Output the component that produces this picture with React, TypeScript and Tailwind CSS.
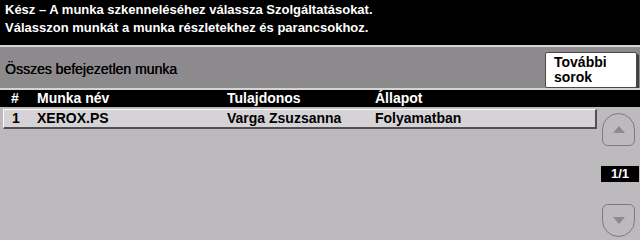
import React from 'react';

// Job list screen of a copier touch panel: status header, queue bar, job table, pager.

interface Job {
  id: number;
  name: string;
  owner: string;
  status: string;
}

const jobs: Job[] = [
  { id: 1, name: 'XEROX.PS', owner: 'Varga Zsuzsanna', status: 'Folyamatban' },
];

function PagerButton({ dir }: { dir: 'up' | 'down' }) {
  const shape =
    dir === 'up'
      ? 'rounded-t-[17px] rounded-b-[6px]'
      : 'rounded-b-[17px] rounded-t-[6px]';
  return (
    <button
      className={`w-[33px] h-[33px] border border-[#7b797b] bg-[#bdbabd] flex items-center justify-center ${shape}`}
      aria-label={dir === 'up' ? 'Fel' : 'Le'}
    >
      <svg width="12" height="7" viewBox="0 0 12 7">
        {dir === 'up' ? (
          <polygon points="6,0 12,7 0,7" fill="#8c8a8c" />
        ) : (
          <polygon points="0,0 12,0 6,7" fill="#8c8a8c" />
        )}
      </svg>
    </button>
  );
}

export default function App() {
  return (
    <div className="w-[640px] h-[240px] overflow-hidden bg-[#bdbabd] flex flex-col font-['Liberation_Sans',Arial,sans-serif] select-none">
      {/* Status message */}
      <div className="h-[45px] bg-black text-white font-bold text-[13px] leading-[18px] pl-[5px] pt-[1px]">
        <div>Kész – A munka szkenneléséhez válassza Szolgáltatásokat.</div>
        <div>Válasszon munkát a munka részletekhez és parancsokhoz.</div>
      </div>
      <div className="h-[2px] bg-[#d6d3d6]" />

      {/* Queue bar */}
      <div className="h-[41px] bg-[#8c8a8c] flex items-center justify-between pl-[5px] pr-[3px]">
        <span className="text-[14px] text-black mt-[3px] [text-shadow:0.3px_0_0_#000]">Összes befejezetlen munka</span>
        <button className="w-[92px] h-[36px] mt-[4px] bg-white border border-[#4a494a] shadow-[2px_2px_0_#424142] rounded-[2px] text-left pl-[8px] text-[14px] font-bold leading-[15px] text-black">
          További
          <br />
          sorok
        </button>
      </div>
      <div className="h-[2px] bg-[#d6d3d6]" />

      {/* Column header */}
      <div className="h-[17px] bg-black text-white font-bold text-[14px] leading-[17px] flex">
        <span className="w-[37px] pl-[11px]">#</span>
        <span className="w-[190px]">Munka név</span>
        <span className="w-[148px]">Tulajdonos</span>
        <span>Állapot</span>
      </div>

      {/* Body */}
      <div className="flex flex-1">
        <div className="w-[597px] pl-[3px] pt-[2px]">
          {jobs.map((job) => (
            <div
              key={job.id}
              className="h-[20px] flex items-center bg-[#d6d3d6] border border-t-white border-l-white border-b-[#525152] border-r-[#525152] border-b-2 border-r-2 text-black font-bold text-[14px]"
            >
              <span className="w-[33px] pl-[8px]">{job.id}</span>
              <span className="w-[190px]">{job.name}</span>
              <span className="w-[148px]">{job.owner}</span>
              <span>{job.status}</span>
            </div>
          ))}
        </div>
        <div className="flex-1 flex flex-col items-center pt-[6px]">
          <PagerButton dir="up" />
          <div className="mt-[20px] w-[38px] h-[16px] bg-black text-white font-bold text-[13px] leading-[16px] text-center ml-[3px]">
            1/1
          </div>
          <div className="mt-[22px]">
            <PagerButton dir="down" />
          </div>
        </div>
      </div>
    </div>
  );
}
